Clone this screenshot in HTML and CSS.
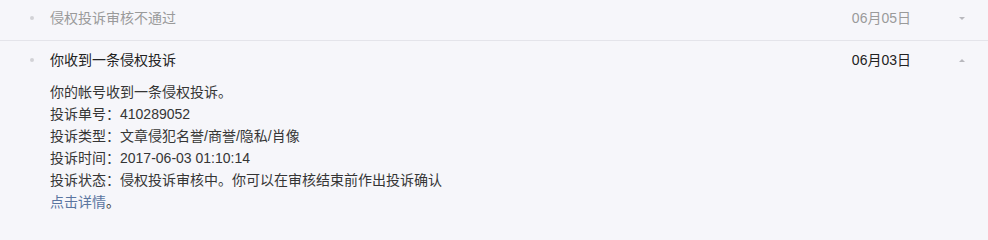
FILE: index.html
```html
<!DOCTYPE html>
<html lang="zh-CN">
<head>
<meta charset="utf-8">
<title>通知</title>
<link rel="stylesheet" href="styles.css">
</head>
<body>
<ul class="list">
  <li class="item item-read">
    <div class="item-head">
      <span class="dot"></span>
      <span class="title">侵权投诉审核不通过</span>
      <span class="date">06月05日</span>
      <span class="toggle"><span class="arrow arrow-down"></span></span>
    </div>
  </li>
  <li class="item item-open">
    <div class="item-head">
      <span class="dot"></span>
      <span class="title">你收到一条侵权投诉</span>
      <span class="date">06月03日</span>
      <span class="toggle"><span class="arrow arrow-up"></span></span>
    </div>
    <div class="item-body">
      <p>你的帐号收到一条侵权投诉。</p>
      <p>投诉单号：410289052</p>
      <p>投诉类型：文章侵犯名誉/商誉/隐私/肖像</p>
      <p>投诉时间：2017-06-03 01:10:14</p>
      <p>投诉状态：侵权投诉审核中。你可以在审核结束前作出投诉确认</p>
      <p><a class="link" href="#">点击详情</a>。</p>
    </div>
  </li>
</ul>
</body>
</html>
```
FILE: styles.css
```css
html, body {
  margin: 0;
  padding: 0;
  background: #f6f6fa;
}
body {
  font-family: "Liberation Sans", "Noto Sans CJK SC", sans-serif;
  color: #353535;
}
.list {
  list-style: none;
  margin: 0;
  padding: 0;
}
.item {
  border-bottom: 1px solid #e4e4ea;
}
.item-open {
  border-bottom: none;
}
.item-head {
  display: flex;
  align-items: center;
  height: 22px;
  padding: 7px 0 11px;
}
.item-open .item-head {
  padding: 8px 0 0;
}
.dot {
  width: 4px;
  height: 4px;
  border-radius: 50%;
  background: #d2d2d6;
  margin: 0 16px 0 30px;
}
.title {
  flex: 1;
  font-size: 14px;
  line-height: 22px;
  color: #222222;
}
.item-read .title,
.item-read .date {
  color: #9a9a9a;
}
.date {
  font-size: 14px;
  line-height: 22px;
  color: #222222;
}
.toggle {
  width: 77px;
  display: flex;
  justify-content: center;
  align-items: center;
}
.arrow {
  width: 0;
  height: 0;
  border-left: 3px solid transparent;
  border-right: 3px solid transparent;
}
.arrow-down {
  border-top: 3px solid #b8b8bd;
  margin-left: 24px;
}
.arrow-up {
  border-bottom: 3px solid #b8b8bd;
  margin-left: 24px;
}
.item-body {
  padding: 10px 0 9px 50px;
  font-size: 14px;
  line-height: 22px;
  color: #353535;
}
.item-body p {
  margin: 0;
}
.link {
  color: #5a75a0;
  text-decoration: none;
}
```
